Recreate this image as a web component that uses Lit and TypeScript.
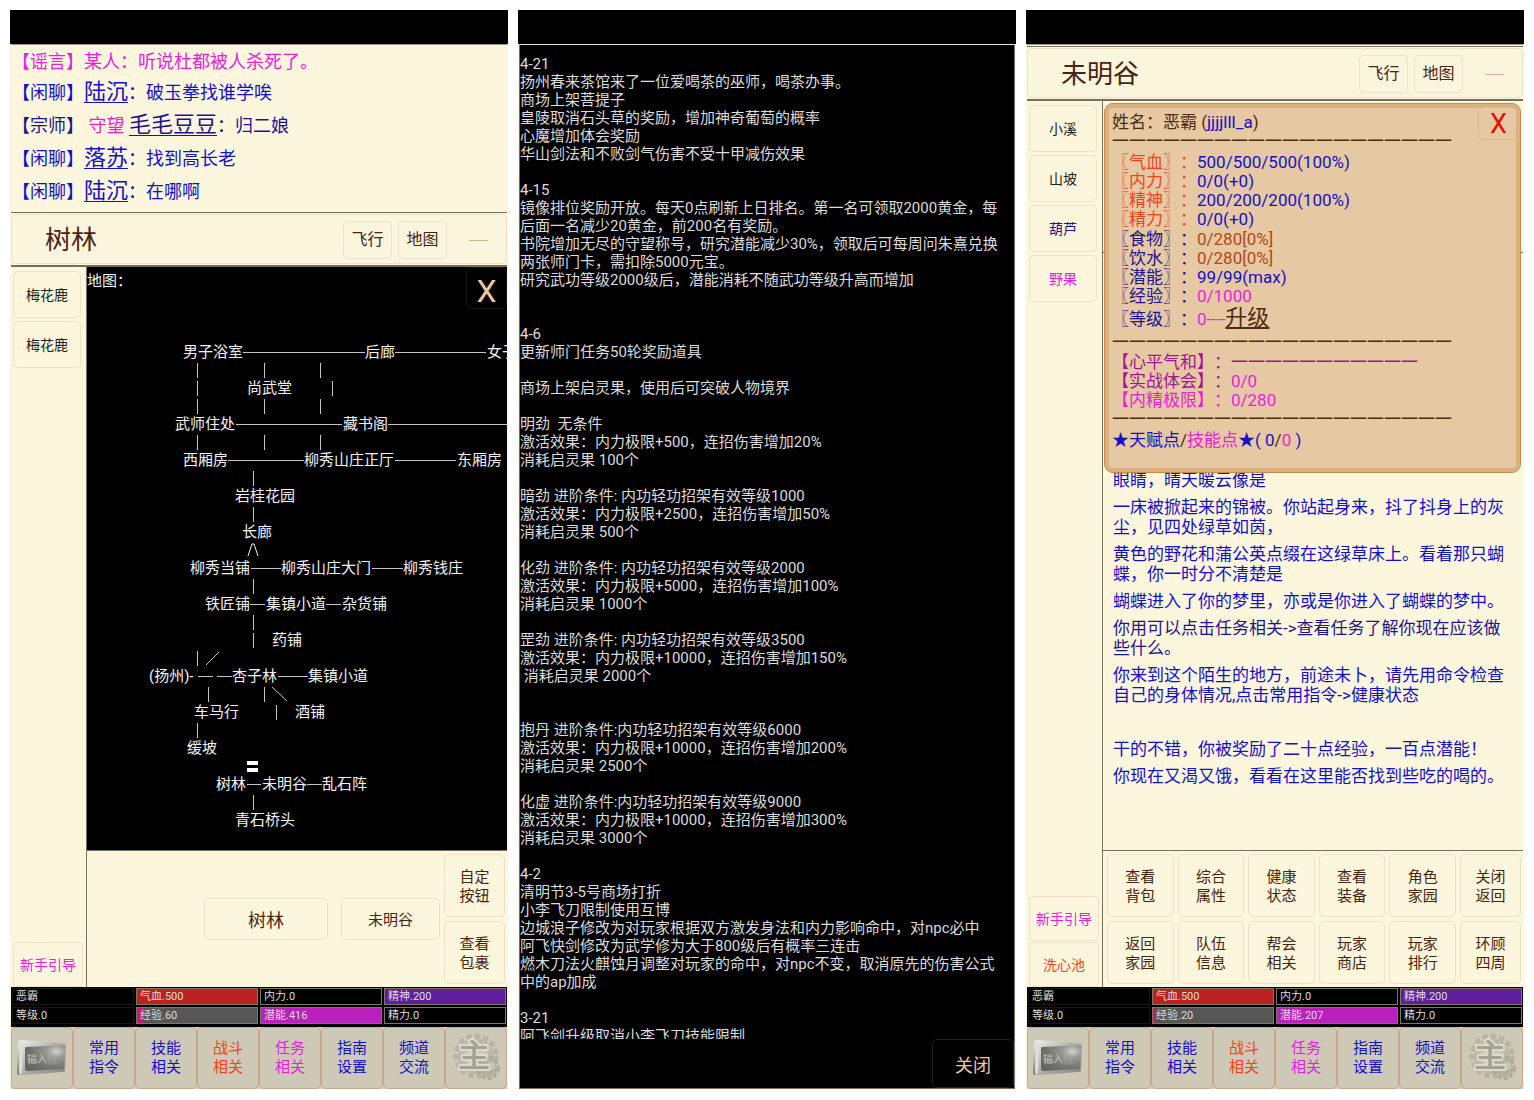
import { LitElement, html, css, svg } from "lit";
import { customElement, property } from "lit/decorators.js";

const base = css`
  * { box-sizing: border-box; }
  :host {
    --cream: #fbf6dc;
    --edge: #efe0c6;
    --rule: #74705c;
    --brown: #4a2412;
    --blue: #1410c8;
    --navy: #1c1490;
    --pink: #ea1ee0;
    --red: #f04420;
  }
  button {
    margin: 0;
    padding: 0;
    font: inherit;
    color: inherit;
    background: none;
    border: 1px solid var(--edge);
    border-radius: 5px;
    cursor: pointer;
  }
  a { color: inherit; }
  .blue { color: var(--blue); }
  .navy { color: var(--navy); }
  .pink { color: var(--pink); }
  .red { color: var(--red); }
`;

type Bar = { text: string; color?: string; track?: string; fill?: number };

@customElement("status-bars")
class StatusBars extends LitElement {
  @property({ attribute: false }) bars: Bar[] = [];
  static styles = [base, css`
    :host { display: block; background: #000; padding: 1px 1px 3px; }
    .grid { display: grid; grid-template-columns: repeat(4, 1fr); gap: 2px; }
    .cell {
      position: relative;
      height: 17px;
      padding: 0 3px;
      font-size: 11px;
      line-height: 16px;
      color: #ddd;
      border: 1px solid #17170f;
      overflow: hidden;
    }
    .framed { border-color: #7c7a58; }
    .fill { position: absolute; left: 0; top: 0; bottom: 0; }
    .label { position: relative; }
  `];
  render() {
    return html`<div class="grid">${this.bars.map((b) => html`
      <div class="cell ${b.color ? "framed" : ""}" style="background:${b.track ?? "#000"}">
        ${b.fill ? html`<div class="fill" style="width:${b.fill}%;background:${b.color}"></div>` : ""}
        <span class="label">${b.text}</span>
      </div>`)}</div>`;
  }
}

@customElement("bottom-nav")
class BottomNav extends LitElement {
  static styles = [base, css`
    :host { display: block; background: #dccbb4; }
    nav { display: grid; grid-template-columns: repeat(8, 1fr); }
    button {
      height: 62px;
      display: flex;
      flex-direction: column;
      align-items: center;
      justify-content: center;
      font-size: 15px;
      line-height: 19px;
      background: #cdc9b6;
      border-color: #cba68c;
    }
    svg { display: block; width: 54px; height: 54px; }
    .tiny { font-size: 10px; font-weight: 700; fill: #aeaeaa; }
    .main { font-size: 32px; font-weight: 500; fill: #a3a193; stroke: #dddacb; stroke-width: 4px; paint-order: stroke; stroke-linejoin: round; }
  `];
  private screen() {
    return html`<svg viewBox="0 0 54 54" role="img" aria-label="输入指令">
      <defs>
        <linearGradient id="f" x1="0" y1="0" x2="1" y2="1">
          <stop offset="0" stop-color="#efefec"/><stop offset=".45" stop-color="#b4b4ac"/><stop offset="1" stop-color="#85857c"/>
        </linearGradient>
        <radialGradient id="s" cx=".78" cy=".25" r=".95">
          <stop offset="0" stop-color="#d2d2ce"/><stop offset=".25" stop-color="#9a9a94"/><stop offset=".7" stop-color="#71716d"/><stop offset="1" stop-color="#62625e"/>
        </radialGradient>
        <linearGradient id="e" x1="0" y1="0" x2="0" y2="1">
          <stop offset="0" stop-color="#f2f2ee"/><stop offset="1" stop-color="#77776e"/>
        </linearGradient>
      </defs>
      <path d="M3 11 L9 9 L9 40 L4 44 Q2 44 2 41 Z" fill="url(#e)"/>
      <path d="M4 10 Q5 9 8 9 L48 12 Q51 12 51 15 L50 39 Q50 41 47 41 L8 44 Q4 45 4 42 Z" fill="url(#f)"/>
      <path d="M5 11 L8 12 L7 42 L4 43 Z" fill="#deded9"/>
      <path d="M11 16 L49 14 Q50 14 50 16 L49 37 Q49 38 48 38 L12 40 Q10 40 10 38 L10 18 Q10 16 11 16 Z" fill="url(#s)"/>
      <text class="tiny" x="12" y="32">输入</text>
      <text class="tiny" x="32" y="32" opacity=".4">指</text>
    </svg>`;
  }
  private gear() {
    return html`<svg viewBox="0 0 54 54" role="img" aria-label="主">
      <circle cx="27" cy="25" r="19" fill="none" stroke="#b7b4a2" stroke-width="7" stroke-dasharray="5 3"/>
      <circle cx="27" cy="25" r="18" fill="#bcb9a8"/>
      <circle cx="27" cy="25" r="12" fill="#cdc9b6"/>
      <circle cx="39" cy="37" r="10" fill="none" stroke="#aeab99" stroke-width="4" stroke-dasharray="4 2"/>
      <circle cx="39" cy="37" r="9" fill="#b3b09e"/>
      <circle cx="42" cy="35" r="4" fill="#c9c5b3"/>
      <text class="main" x="25" y="36" text-anchor="middle">主</text>
    </svg>`;
  }
  render() {
    const items: [string, string, string][] = [
      ["常用", "指令", "blue"], ["技能", "相关", "blue"], ["战斗", "相关", "red"],
      ["任务", "相关", "pink"], ["指南", "设置", "blue"], ["频道", "交流", "blue"],
    ];
    return html`<nav>
      <button aria-label="输入指令">${this.screen()}</button>
      ${items.map(([a, b, c]) => html`<button class=${c}><span>${a}</span><span>${b}</span></button>`)}
      <button aria-label="主">${this.gear()}</button>
    </nav>`;
  }
}

@customElement("room-header")
class RoomHeader extends LitElement {
  @property() name = "";
  static styles = [base, css`
    :host { display: block; border-top: 1px solid var(--rule); border-bottom: 2px solid var(--rule); padding: 1px 0; }
    header {
      display: flex;
      align-items: center;
      gap: 6px;
      height: 50px;
      padding: 2px 3px 0 33px;
      color: var(--brown);
      background: #faf5dd;
      border: 1px solid var(--edge);
      border-radius: 5px;
    }
    h1 { flex: 1; margin: 0; font-size: 26px; font-weight: 400; line-height: 32px; }
    button { width: 49px; height: 38px; font-size: 16px; line-height: 20px; }
    .min { width: 50px; border: 0; display: flex; align-items: center; justify-content: center; }
    .dash { width: 19px; height: 1px; background: #d6b28c; }
  `];
  render() {
    return html`<header>
      <h1>${this.name}</h1>
      <button>飞行</button><button>地图</button>
      <button class="min" aria-label="收起"><span class="dash"></span></button>
    </header>`;
  }
}

/* Rooms: name, left edge, row centre. */
const rooms: [string, number, number][] = [
  ["男子浴室", 96, 85], ["后廊", 278, 85], ["女子浴室", 400, 85], ["尚武堂", 160, 121],
  ["武师住处", 88, 157], ["藏书阁", 256, 157], ["西厢房", 96, 193], ["柳秀山庄正厅", 217, 193],
  ["东厢房", 370, 193], ["岩桂花园", 148, 229], ["长廊", 155, 265],
  ["柳秀当铺", 103, 301], ["柳秀山庄大门", 194, 301], ["柳秀钱庄", 316, 301],
  ["铁匠铺", 118, 337], ["集镇小道", 179, 337], ["杂货铺", 255, 337], ["药铺", 185, 373],
  ["(扬州)-", 62, 409], ["杏子林", 145, 409], ["集镇小道", 221, 409],
  ["车马行", 107, 445], ["酒铺", 208, 445], ["缓坡", 100, 481],
  ["树林", 129, 517], ["未明谷", 175, 517], ["乱石阵", 235, 517], ["青石桥头", 148, 553],
];
/* Horizontal links: start, end, row centre. */
const across: [number, number, number][] = [
  [156, 278, 85], [308, 399, 85], [149, 255, 157], [301, 420, 157], [141, 217, 193], [308, 369, 193],
  [164, 194, 301], [285, 316, 301], [163, 178, 337], [239, 254, 337],
  [111, 126, 409], [130, 145, 409], [191, 221, 409], [160, 174, 517], [220, 235, 517],
];
/* Vertical links: column, row centre. */
const down: [number, number][] = [
  [110, 103], [177, 103], [233, 103], [110, 121], [245, 121], [110, 139], [177, 139], [233, 139],
  [110, 175], [177, 175], [233, 175], [166, 211], [166, 247], [166, 319], [166, 355], [166, 373],
  [110, 391], [121, 427], [177, 427], [189, 445], [110, 463], [166, 535],
];

@customElement("area-map")
class AreaMap extends LitElement {
  static styles = [base, css`
    :host { display: block; position: relative; overflow: hidden; background: #000; color: #f2f2f2; font-size: 15px; line-height: 20px; }
    svg { position: absolute; left: 0; top: 0; width: 100%; height: 100%; }
    .title { padding-top: 4px; }
    .room { position: absolute; white-space: nowrap; transform: translateY(-50%); }
    button { position: absolute; right: 0; top: 0; width: 41px; height: 42px; font-size: 32px; line-height: 40px; padding-top: 3px; color: #e8c9a6; border-color: #21160f; }
  `];
  render() {
    return html`<div class="title">地图：</div>
      <svg aria-hidden="true" stroke="#c4c4c4" stroke-width="1">
        ${across.map(([a, b, y]) => svg`<line x1=${a} x2=${b} y1=${y + 0.5} y2=${y + 0.5}/>`)}
        ${down.map(([x, y]) => svg`<line x1=${x + 0.5} x2=${x + 0.5} y1=${y - 7} y2=${y + 8}/>`)}
        <path d="M119 398 L132 385 M185 420 L200 434" fill="none"/>
        <path d="M161 289 L165 277 L167 277 L171 289" fill="none" stroke="#f2f2f2"/>
        <path d="M160 494h11v4h-11z M160 501h11v4h-11z" fill="#fff" stroke="none"/>
      </svg>
      ${rooms.map(([t, x, y]) => html`<span class="room" style="left:${x}px;top:${y}px">${t}</span>`)}
      <button aria-label="关闭地图">X</button>`;
  }
}

const news = `4-21
扬州春来茶馆来了一位爱喝茶的巫师，喝茶办事。
商场上架菩提子
皇陵取消石头草的奖励，增加神奇葡萄的概率
心魔增加体会奖励
华山剑法和不败剑气伤害不受十甲减伤效果

4-15
镜像排位奖励开放。每天0点刷新上日排名。第一名可领取2000黄金，每后面一名减少20黄金，前200名有奖励。
书院增加无尽的守望称号，研究潜能减少30%，领取后可每周问朱熹兑换两张师门卡，需扣除5000元宝。
研究武功等级2000级后，潜能消耗不随武功等级升高而增加


4-6
更新师门任务50轮奖励道具

商场上架启灵果，使用后可突破人物境界

明劲  无条件
激活效果：内力极限+500，连招伤害增加20%
消耗启灵果 100个

暗劲 进阶条件: 内功轻功招架有效等级1000
激活效果：内力极限+2500，连招伤害增加50%
消耗启灵果 500个

化劲 进阶条件: 内功轻功招架有效等级2000
激活效果：内力极限+5000，连招伤害增加100%
消耗启灵果 1000个

罡劲 进阶条件: 内功轻功招架有效等级3500
激活效果：内力极限+10000，连招伤害增加150%
 消耗启灵果 2000个


抱丹 进阶条件:内功轻功招架有效等级6000
激活效果：内力极限+10000，连招伤害增加200%
消耗启灵果 2500个

化虚 进阶条件:内功轻功招架有效等级9000
激活效果：内力极限+10000，连招伤害增加300%
消耗启灵果 3000个

4-2
清明节3-5号商场打折
小李飞刀限制使用互博
边城浪子修改为对玩家根据双方激发身法和内力影响命中，对npc必中
阿飞快剑修改为武学修为大于800级后有概率三连击
燃木刀法火麒蚀月调整对玩家的命中，对npc不变，取消原先的伤害公式中的ap加成

3-21
阿飞剑升级取消小李飞刀技能限制`;

@customElement("character-card")
class CharacterCard extends LitElement {
  static styles = [base, css`
    :host {
      display: block;
      padding: 9px 7px 22px;
      font-size: 17px;
      line-height: 19px;
      color: #4e2c10;
      background: #e6c8a2;
      border: 1px solid #c58a50;
      border-radius: 9px;
      box-shadow: inset 0 0 0 4px #deb079;
      white-space: nowrap;
      overflow: hidden;
    }
    .rule { height: 20px; }
    .group { padding-top: 1px; }
    .tight { padding-top: 0; }
    .row { height: 19px; }
    .level { height: 27px; line-height: 27px; }
    .level a { font-size: 22px; line-height: 19px; color: #4e2c10; }
    .rust { color: #b04818; }
    .plum { color: #a0149a; }
    .points { padding-top: 1px; white-space: pre; }
    button { position: absolute; right: 1px; top: 3px; width: 41px; height: 33px; font-size: 27px; line-height: 30px; color: #e80c08; border-color: #dcb88e; }
  `];
  private row(label: string, tone: string, value: string, vtone: string) {
    return html`<div class="row"><span class=${tone}>${label}：</span><span class=${vtone}>${value}</span></div>`;
  }
  render() {
    const rule = html`<div class="rule">${"一".repeat(20)}</div>`;
    return html`
      <div class="row">姓名：恶霸 (<span class="blue">jjjjlll_a</span>)</div>
      ${rule}
      <div class="group">
        ${this.row("〖气血〗", "red", "500/500/500(100%)", "blue")}
        ${this.row("〖内力〗", "red", "0/0(+0)", "blue")}
        ${this.row("〖精神〗", "red", "200/200/200(100%)", "blue")}
        ${this.row("〖精力〗", "red", "0/0(+0)", "blue")}
      </div>
      <div class="group">
        ${this.row("〖食物〗", "navy", "0/280[0%]", "rust")}
        ${this.row("〖饮水〗", "navy", "0/280[0%]", "rust")}
        ${this.row("〖潜能〗", "navy", "99/99(max)", "blue")}
        ${this.row("〖经验〗", "navy", "0/1000", "pink")}
        <div class="level"><span class="navy">〖等级〗：</span><span class="pink">0----</span><a href="#levelup">升级</a></div>
      </div>
      ${rule}
      <div class="group tight">
        ${this.row("【心平气和】", "plum", "一".repeat(11), "plum")}
        ${this.row("【实战体会】", "plum", "0/0", "pink")}
        ${this.row("【内精极限】", "pink", "0/280", "pink")}
      </div>
      ${rule}
      <div class="points"><span class="blue">★天赋点</span>/<span class="pink">技能点</span><span class="blue">★( 0</span>/<span class="pink">0</span><span class="blue"> )</span></div>
      <button aria-label="关闭">X</button>`;
  }
}

@customElement("app-root")
class AppRoot extends LitElement {
  static styles = [base, css`
    :host {
      display: block;
      background: #fff;
      font-family: Roboto, "Noto Sans CJK SC", sans-serif;
      text-spacing-trim: space-all;
    }
    .page { display: grid; grid-template-columns: repeat(3, minmax(0, 1fr)); gap: 10px; height: 100vh; padding: 10px 10px 11px; }
    .phone { display: flex; flex-direction: column; min-height: 0; background: var(--cream); }
    .notch { height: 34px; flex: none; background: #000; }
    .screen { flex: 1; min-height: 0; display: flex; flex-direction: column; margin: 0 1px; border-top: 1px solid #9c9a88; }
    .spaced { padding-top: 1px; }
    .chat { height: 167px; padding: 3px 1px 0; font-size: 18px; line-height: 27px; white-space: nowrap; overflow: hidden; }
    .chat a { font-size: 22px; line-height: 33px; text-underline-offset: 3px; text-decoration-thickness: 1px; }
    .body { flex: 1; min-height: 0; display: flex; }
    .side { width: 76px; flex: none; display: flex; flex-direction: column; gap: 3px; padding: 4px 2px 0; border-right: 1px solid var(--rule); font-size: 14px; line-height: 20px; color: #222; }
    .side button { height: 47px; margin-right: 3px; }
    .side .push { margin-top: auto; }
    .side .low { height: 45px; margin-right: 1px; }
    .side .last { margin-top: -2px; }
    .main { flex: 1; min-width: 0; display: flex; flex-direction: column; position: relative; }
    area-map { flex: 1; }
    .actions { height: 137px; flex: none; border-top: 1px solid var(--rule); padding: 3px 2px 3px 4px; display: grid; gap: 4px; font-size: 15px; line-height: 19px; color: var(--brown); }
    .actions button { display: flex; flex-direction: column; align-items: center; justify-content: center; padding-top: 2px; }
    .six { grid-template: 1fr 1fr / repeat(5, 1fr) 61px; }
    .exits { grid-template: 1fr 1fr / 1fr 61px; }
    .paths { grid-row: span 2; display: flex; align-items: center; justify-content: flex-end; gap: 13px; }
    .paths button { height: 42px; width: 99px; }
    .paths .here { width: 124px; font-size: 18px; }
    .news { flex: 1; min-height: 0; display: flex; flex-direction: column; margin: 0 1px; background: #000; color: #dcdcdc; border: 1px solid #77745a; border-top-color: #e8e6d8; border-bottom-color: #8c6c4c; }
    .news pre { flex: 1; min-height: 0; margin: 0; padding: 10px 8px 0 0; overflow: hidden; font: inherit; font-size: 15px; line-height: 18px; white-space: pre-wrap; }
    .foot { flex: none; display: flex; justify-content: flex-end; }
    .foot button { width: 82px; height: 49px; font-size: 18px; color: #e8c9a6; border-color: #2c1c12; }
    .past { height: 152px; flex: none; border-bottom: 1px solid var(--rule); }
    .log { flex: 1; min-height: 0; display: flex; flex-direction: column; justify-content: flex-end; gap: 7px; padding: 0 10px 64px; overflow: hidden; font-size: 17px; line-height: 20px; }
    .log p { margin: 0; min-height: 20px; flex: none; }
    .card { position: absolute; left: 1px; right: 2px; top: 2px; }
  `];

  private bars(exp: string, expFill: number, pot: string): Bar[] {
    return [
      { text: "恶霸" },
      { text: "气血.500", color: "#bb2323", fill: 100 },
      { text: "内力.0", color: "#000" },
      { text: "精神.200", color: "#5f1f9f", fill: 100 },
      { text: "等级.0" },
      { text: exp, color: "#c81a72", fill: expFill, track: "#565656" },
      { text: pot, color: "#bb20bb", fill: 100 },
      { text: "精力.0", color: "#000" },
    ];
  }

  private pair(t: string) {
    return html`<button><span>${t.slice(0, 2)}</span><span>${t.slice(2)}</span></button>`;
  }

  render() {
    const cells = ["查看背包", "综合属性", "健康状态", "查看装备", "角色家园", "关闭返回",
      "返回家园", "队伍信息", "帮会相关", "玩家商店", "玩家排行", "环顾四周"];
    return html`<div class="page">
      <section class="phone">
        <div class="notch"></div>
        <div class="screen">
          <div class="chat">
            <div class="pink">【谣言】某人：听说杜都被人杀死了。</div>
            <div class="blue">【闲聊】<a href="#p1">陆沉</a>：破玉拳找谁学唉</div>
            <div class="navy">【宗师】 <span class="pink">守望</span> <a href="#p2">毛毛豆豆</a>：归二娘</div>
            <div class="blue">【闲聊】<a href="#p3">落苏</a>：找到高长老</div>
            <div class="blue">【闲聊】<a href="#p1">陆沉</a>：在哪啊</div>
          </div>
          <room-header name="树林"></room-header>
          <div class="body">
            <div class="side">
              <button>梅花鹿</button><button>梅花鹿</button>
              <button class="low push pink">新手引导</button>
            </div>
            <div class="main">
              <area-map></area-map>
              <div class="actions exits">
                <div class="paths"><button class="here">树林</button><button>未明谷</button></div>
                ${this.pair("自定按钮")}${this.pair("查看包裹")}
              </div>
            </div>
          </div>
          <status-bars .bars=${this.bars("经验.60", 6, "潜能.416")}></status-bars>
          <bottom-nav></bottom-nav>
        </div>
      </section>

      <section class="phone">
        <div class="notch"></div>
        <div class="news">
          <pre>${news}</pre>
          <div class="foot"><button>关闭</button></div>
        </div>
      </section>

      <section class="phone">
        <div class="notch"></div>
        <div class="screen spaced">
          <room-header name="未明谷"></room-header>
          <div class="body">
            <div class="side">
              <button>小溪</button><button>山坡</button>
              <button class="navy">葫芦</button><button class="pink">野果</button>
              <button class="low push pink">新手引导</button>
              <button class="low last red">洗心池</button>
            </div>
            <div class="main">
              <div class="past"></div>
              <div class="log">
                <p class="blue">眼睛，晴天暖云像是</p>
                <p class="blue">一床被掀起来的锦被。你站起身来，抖了抖身上的灰尘，见四处绿草如茵，</p>
                <p class="blue">黄色的野花和蒲公英点缀在这绿草床上。看着那只蝴蝶，你一时分不清楚是</p>
                <p class="blue">蝴蝶进入了你的梦里，亦或是你进入了蝴蝶的梦中。</p>
                <p class="navy">你用可以点击任务相关-&gt;查看任务了解你现在应该做些什么。</p>
                <p class="blue">你来到这个陌生的地方，前途未卜，请先用命令检查自己的身体情况,点击常用指令-&gt;健康状态</p>
                <p></p>
                <p class="blue">干的不错，你被奖励了二十点经验，一百点潜能！</p>
                <p class="blue">你现在又渴又饿，看看在这里能否找到些吃的喝的。</p>
              </div>
              <character-card class="card"></character-card>
              <div class="actions six">${cells.map((c) => this.pair(c))}</div>
            </div>
          </div>
          <status-bars .bars=${this.bars("经验.20", 2, "潜能.207")}></status-bars>
          <bottom-nav></bottom-nav>
        </div>
      </section>
    </div>`;
  }
}
